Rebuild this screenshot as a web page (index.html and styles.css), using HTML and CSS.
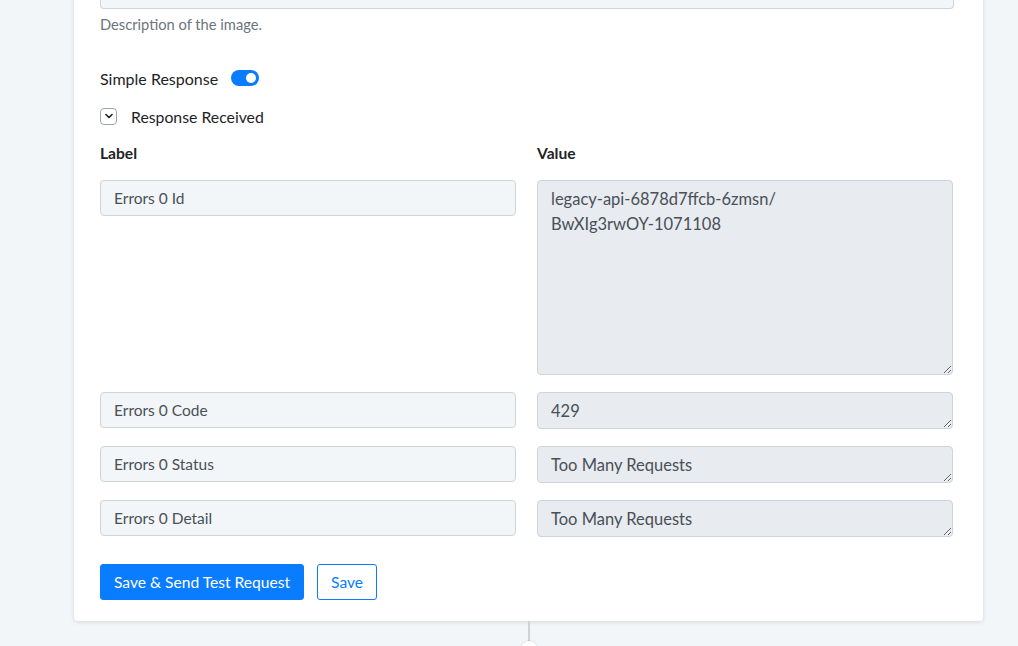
FILE: index.html
```html
<!DOCTYPE html>
<html>
<head>
<meta charset="utf-8">
<link rel="stylesheet" href="styles.css">
</head>
<body>
<div class="page">
  <div class="card">
    <div class="top-input"></div>
    <div class="help">Description of the image.</div>

    <div class="toggle-row">
      <span>Simple Response</span>
      <span class="toggle"><span class="knob"></span></span>
    </div>

    <div class="check-row">
      <span class="chev">
        <svg width="10" height="10" viewBox="0 0 10 10"><path d="M2 3.5 L5 6.5 L8 3.5" fill="none" stroke="#222" stroke-width="1.6" stroke-linecap="round" stroke-linejoin="round"/></svg>
      </span>
      <span>Response Received</span>
    </div>

    <div class="grid">
      <div class="head">Label</div>
      <div class="head">Value</div>

      <div class="field">Errors 0 Id</div>
      <textarea class="val tall" readonly>legacy-api-6878d7ffcb-6zmsn/
BwXIg3rwOY-1071108</textarea>

      <div class="field">Errors 0 Code</div>
      <textarea class="val" readonly>429</textarea>

      <div class="field">Errors 0 Status</div>
      <textarea class="val" readonly>Too Many Requests</textarea>

      <div class="field">Errors 0 Detail</div>
      <textarea class="val" readonly>Too Many Requests</textarea>
    </div>

    <div class="actions">
      <button class="btn primary">Save &amp; Send Test Request</button>
      <button class="btn outline">Save</button>
    </div>
  </div>
  <div class="connector">
    <div class="line"></div>
    <div class="dot"></div>
  </div>
</div>
</body>
</html>
```

FILE: styles.css
```css
html, body {
  margin: 0;
  padding: 0;
  background: #f3f6f9;
  font-family: Lato, "Open Sans", sans-serif;
  color: #1f2326;
  overflow: hidden;
  height: 646px;
}
.page {
  width: 1018px;
  display: flex;
  flex-direction: column;
  align-items: flex-start;
}
.card {
  margin-left: 74px;
  margin-top: -30px;
  width: 909px;
  box-sizing: border-box;
  background: #fff;
  padding: 0 29px 21px 26px;
  border-radius: 0 0 4px 4px;
  box-shadow: 0 1px 4px rgba(40, 50, 70, 0.16);
}
.top-input {
  height: 39px;
  background: #f3f6f9;
  border: 1px solid #ced4da;
  border-top: none;
  border-radius: 0 0 4px 4px;
  box-sizing: border-box;
}
.help {
  margin-top: 6px;
  font-size: 14.7px;
  color: #6c757d;
  line-height: 18px;
}
.toggle-row {
  margin-top: 35px;
  display: flex;
  align-items: center;
  font-size: 16px;
  height: 20px;
}
.toggle {
  margin-left: 13px;
  width: 28px;
  height: 16px;
  border-radius: 8px;
  background: #0a7cff;
  position: relative;
  display: inline-block;
}
.knob {
  position: absolute;
  right: 3px;
  top: 3px;
  width: 10px;
  height: 10px;
  border-radius: 50%;
  background: #fff;
}
.check-row {
  margin-top: 18px;
  display: flex;
  align-items: center;
  font-size: 15.8px;
  height: 20px;
}
.chev {
  width: 17px;
  height: 17px;
  box-sizing: border-box;
  border: 1px solid #a0a7ae;
  border-radius: 4px;
  display: flex;
  align-items: center;
  justify-content: center;
  margin-right: 14px;
}
.grid {
  margin-top: 17px;
  display: grid;
  grid-template-columns: 416px 416px;
  column-gap: 21px;
  row-gap: 17px;
  align-items: start;
}
.head {
  font-weight: bold;
  font-size: 15.6px;
  line-height: 20px;
  margin-bottom: 0;
}
.field {
  height: 36px;
  box-sizing: border-box;
  background: #f3f6f9;
  border: 1px solid #ced4da;
  border-radius: 4px;
  padding: 0 13px;
  display: flex;
  align-items: center;
  font-size: 15.5px;
  color: #495057;
}
.val {
  display: block;
  width: 416px;
  height: 37px;
  box-sizing: border-box;
  margin: 0;
  background: #e8ebef;
  border: 1px solid #ced4da;
  border-radius: 4px;
  padding: 6px 13px 0;
  font-family: Lato, "Open Sans", sans-serif;
  font-size: 16.5px;
  line-height: 25px;
  color: #495057;
  resize: vertical;
  overflow: hidden;
  outline: none;
}
.val.tall {
  height: 195px;
}
.actions {
  margin-top: 27px;
  display: flex;
  gap: 13px;
}
.btn {
  height: 36px;
  font-family: Lato, "Open Sans", sans-serif;
  font-size: 15.6px;
  border-radius: 3px;
  padding: 0 13px;
  cursor: pointer;
}
.primary {
  background: #0a7cff;
  border: 1px solid #0a7cff;
  color: #fff;
}
.outline {
  background: #fff;
  border: 1px solid #0a7cff;
  color: #0a7cff;
}
.connector {
  margin-left: 521px;
  width: 16px;
  display: flex;
  flex-direction: column;
  align-items: center;
}
.line {
  width: 2px;
  height: 20px;
  background: #cfd3d9;
}
.dot {
  width: 16px;
  height: 16px;
  border-radius: 50%;
  background: #fff;
  box-shadow: 0 0 2px rgba(0,0,0,0.2);
}
```
